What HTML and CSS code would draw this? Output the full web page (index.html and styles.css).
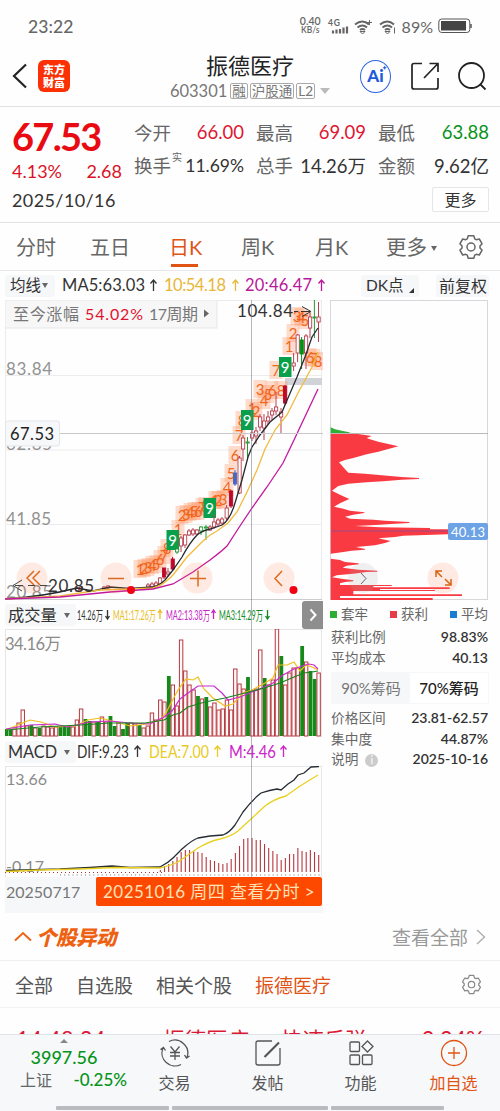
FILE: index.html
```html
<!DOCTYPE html>
<html lang="zh-CN">
<head>
    <meta charset="UTF-8">
    <meta name="viewport" content="width=device-width, initial-scale=1.0">
    <title>振德医疗 603301</title>
    <link rel="stylesheet" href="styles.css">
</head>
<body>
    <div class="app">
        <div class="status-bar">
            <span class="clock">23:22</span>
            <div class="status-right">
                <div class="net-speed"><span>0.40</span><span>KB/s</span></div>
                <svg class="status-icons" width="70" height="20" viewBox="328 15.500 70 20">
                    <text x="329" y="25" font-size="8.500" font-weight="700" textLength="12">4G</text>
                    <path d="M334 33v-3M337.500 33v-4M341 33v-4.500M344.500 33v-6M348 33v-7" stroke-width="2.200"/>
                    <path d="M356 24q7.500-6 14 0M358.500 27q5-4 9.500 0M361 29.500q2.500-2 5 0" stroke-width="2"/>
                    <path d="M361 31l2.500 2.500L366 31zM368 22h5M370.500 19.500v5"/>
                    <path d="M381 24q7.500-6 14 0M383.500 27q5-4 9.500 0M386 29.500q2.500-2 5 0" stroke-width="2"/>
                    <path d="M386 31l2.500 2.500L391 31zM395.500 27v6"/>
                </svg>
                <span class="battery-text">89%</span>
                <svg width="34" height="16" viewBox="0 0 34 16"><rect x=".8" y="1" width="31" height="13.500" rx="3" fill="none" stroke="#555"/><rect x="3" y="3" width="25" height="9.500" fill="#444"/><path d="M33 6v4" stroke="#555" stroke-width="1.500"/></svg>
            </div>
        </div>

        <header class="header">
            <div class="header-left">
                <svg width="16" height="26" viewBox="0 0 16 26"><path d="M14 1.500 2 13l12 11.500" fill="none" stroke="#222" stroke-width="2.200"/></svg>
                <div class="brand">东方<br>财富</div>
            </div>
            <div class="stock-title">
                <h1>振德医疗</h1>
                <div class="stock-code"><b>603301</b><i>融</i><i>沪股通</i><i class="level">L2</i><span class="caret"></span></div>
            </div>
            <div class="header-right">
                <div class="ai">Ai<sup>✦</sup></div>
                <svg width="28" height="28" viewBox="0 0 28 28" fill="none" stroke="#222" stroke-width="1.700"><path d="M11 1.500H3Q1 1.500 1 3.500V25q0 2 2 2H25q2 0 2-2V16M13 16 27 1.500M18.500 1.500H27V10"/></svg>
                <svg width="29" height="29" viewBox="0 0 29 29" fill="none" stroke="#222" stroke-width="1.800"><circle cx="13.500" cy="13.500" r="12.500"/><path d="m22 22 5.500 5.500"/></svg>
            </div>
        </header>

        <section class="quote">
            <div class="quote-main">
                <div class="price">67.53</div>
                <div class="change"><span>4.13%</span><span>2.68</span></div>
                <div class="date">2025/10/16</div>
            </div>
            <div class="quote-grid">
                <div class="cell"><label>今开</label><span class="up">66.00</span></div>
                <div class="cell"><label>最高</label><span class="up">69.09</span></div>
                <div class="cell"><label>最低</label><span class="down">63.88</span></div>
                <div class="cell"><label>换手<sup>实</sup></label><span class="rate">11.69%</span></div>
                <div class="cell"><label>总手</label><span>14.26万</span></div>
                <div class="cell"><label>金额</label><span>9.62亿</span></div>
                <button class="more">更多</button>
            </div>
        </section>

        <nav class="period-tabs">
            <span>分时</span>
            <span class="tab-five">五日</span>
            <span class="active">日K</span>
            <span>周K</span>
            <span class="tab-month">月K</span>
            <span class="more-tab">更多<em></em></span>
            <svg class="gear" width="26" height="26" viewBox="0 0 26 26"><use href="#gear"/></svg>
        </nav>

        <section class="charts">
            <div class="ma-row">
                <span class="pill">均线<em></em></span>
                <svg width="268" height="29" viewBox="60 271 268 29">
                    <g font-size="16.500">
                        <text x="62" y="291" fill="#333" textLength="83">MA5:63.03</text>
                        <text x="164" y="291" fill="#e9b63a" textLength="62">10:54.18</text>
                        <text x="245" y="291" fill="#b8189a" textLength="67">20:46.47</text>
                    </g>
                    <path d="M153.500 291v-11m-3 3.500 3-3.500 3 3.500" stroke="#333" class="arrow"/>
                    <path d="M235.500 291v-11m-3 3.500 3-3.500 3 3.500" stroke="#e9b63a" class="arrow"/>
                    <path d="M321.500 291v-11m-3 3.500 3-3.500 3 3.500" stroke="#b8189a" class="arrow"/>
                </svg>
                <span class="pill dk">DK点<em></em></span>
                <span class="pill">前复权</span>
            </div>

            <div class="chart-body">
                <div class="chart-left">
                    <svg id="kline" width="318" height="300" viewBox="5 300 318 300">
                        <g stroke="#ececec">
                            <path d="M5.500 300V600M321.500 300V600M5 300.500H322M5 375.500H322M5 450H322M5 524.500H322"/>
                            <path d="M5 599.500H322" stroke="#ccc"/>
                        </g>
                        <g font-size="17" fill="#929292">
                            <text x="6" y="375" textLength="46">83.84</text>
                            <text x="6" y="450" textLength="46">62.85</text>
                            <text x="6" y="525" textLength="45">41.85</text>
                            <text x="6" y="598" textLength="46">20.85</text>
                        </g>
                        <rect x="5" y="300" width="212" height="28" fill="#f7f7f8" stroke="#e7e7e9"/>
                        <g font-size="16">
                            <text x="13" y="319.500" fill="#777" textLength="66">至今涨幅</text>
                            <text x="85" y="319.500" fill="#e01330" textLength="58">54.02%</text>
                            <text x="149" y="319.500" fill="#777" textLength="49">17周期</text>
                        </g>
                        <path d="M204 309.500v8l5-4z" fill="#666"/>
                        <rect x="285" y="378" width="37" height="7" fill="#d2d3d8"/>
                        <g id="marks"></g>
                        <g id="candles"></g>
                        <g fill="none" stroke-width="1.300">
                            <path stroke="#262a2e" d="M5 599C22 598 50 595 77 588L93 591 110 587 130 588.500 153 587Q160 585 165 580L173 570 182 557Q190 542 198 534 204 530 210 529L222 525Q230 520 235 503L242 480 248 457 252 447 260 435 270 422 282 412 288 398 297 377 305 357 312 337 318 328"/>
                            <path stroke="#f0bb3c" d="M5 599 60 596 100 590 130 589 153 588Q164 585 173 575L187 557 203 541Q209 535 217 531L228 523 237 512 247 492 257 470 265 449 275 430 287 415 298 393 312 367 318 352"/>
                            <path stroke="#c3189e" d="M5 599 60 597 110 592 153 589 173 584 193 572 210 560Q222 551 227 546L238 529 252 508 267 487 283 463 294 440 318 389"/>
                        </g>
                        <path d="M5 433.500H323" stroke="#c8c8cc"/>
                        <rect x="5.500" y="421" width="54" height="25" rx="2" fill="#f7f8fa" stroke="#e4e5e8"/>
                        <text x="10" y="439.500" font-size="16.500" fill="#222" textLength="44">67.53</text>
                        <text x="237" y="317" font-size="17" fill="#333" textLength="56">104.84</text>
                        <path d="M294 311.500h4m3 0h9m-8-5 9 5-9 5" stroke="#333" fill="none"/>
                        <g fill="#ff7a45" fill-opacity=".15">
                            <circle cx="32" cy="578" r="15.500"/><circle cx="116" cy="578" r="15.500"/><circle cx="197" cy="578" r="15.500"/><circle cx="279" cy="578" r="15.500"/>
                        </g>
                        <path d="m34 571-7 7 7 7m6-14-7 7 7 7M108 578.500h16M190 578.500h16m-8-8v16M282 571l-7 7.500 7 7.500" fill="none" stroke="#dc6a20" stroke-width="1.500"/>
                        <text x="48" y="592" font-size="17" fill="#333" textLength="46">20.85</text>
                        <path d="m22 580-9 5.500 9 5.500M15 585.500h8m5 0h7m5 0h7" stroke="#444" fill="none"/>
                        <circle cx="131" cy="590" r="4" fill="#f30012"/><circle cx="293.500" cy="590" r="4" fill="#f30012"/>
                    </svg>

                    <div class="indicator-row">
                        <span class="pill wide">成交量<em></em></span>
                        <svg width="196" height="29" viewBox="76 600 196 29" font-size="13">
                            <text x="77" y="619.500" fill="#333" textLength="26" lengthAdjust="spacingAndGlyphs">14.26万</text>
                            <text x="113" y="619.500" fill="#e8bd25" textLength="43" lengthAdjust="spacingAndGlyphs">MA1:17.26万</text>
                            <text x="166" y="619.500" fill="#c824c8" textLength="44" lengthAdjust="spacingAndGlyphs">MA2:13.38万</text>
                            <text x="219" y="619.500" fill="#108b20" textLength="44" lengthAdjust="spacingAndGlyphs">MA3:14.29万</text>
                            <path class="arrow" stroke="#333" d="M107.500 610v9m-2-3 2 3 2-3"/>
                            <path class="arrow" stroke="#e8bd25" d="M160 619v-9m-2 3 2-3 2 3"/>
                            <path class="arrow" stroke="#c824c8" d="M213.500 619v-9m-2 3 2-3 2 3"/>
                            <path class="arrow" stroke="#108b20" d="M267.500 610v9m-2-3 2 3 2-3"/>
                        </svg>
                        <svg class="expand" width="21" height="28" viewBox="0 0 21 28"><rect width="24" height="28" rx="3" fill="#8e8e8e"/><path d="m8.500 8.500 5 5.500-5 5.500" fill="none" stroke="#fff" stroke-width="2"/></svg>
                    </div>

                    <svg id="volume" width="318" height="108" viewBox="5 629 318 108">
                        <path d="M5 629.500H322M5.500 629V737M321.500 629V737" stroke="#e6e6e6"/>
                        <text x="5" y="650" font-size="16.500" fill="#8b8b8b" textLength="56">34.16万</text>
                        <g id="volume-bars"></g>
                        <g fill="none" stroke-width="1.200">
                            <path stroke="#f0c01d" d="M6 730 20 724 30 720 41 722 55 727 75 726 88 720 100 718 120 723 130 726 147 724 160 720 166 713 170 705 178 690 186 679 193 680 198 677 204 689 213 698 225 706 233 704 243 693 252 690 265 683 273 678 278 665 287 665 294 662 300 671 306 665 312 667 318 670"/>
                            <path stroke="#c82ccc" d="M6 729 30 725 55 724 67 727 90 722 110 721 130 723 150 724 164 717 172 711 180 699 188 693 198 686 214 686 222 693 228 700 240 697 252 692 260 689 273 683 283 675 294 669 302 666 309 664 314 665 318 669"/>
                            <path stroke="#188320" d="M6 730 40 727 80 725 110 723 145 723 164 720 173 715 180 713 188 707 205 702 225 698 245 693 264 688 280 683 294 677 304 673 312 672 318 671"/>
                        </g>
                    </svg>

                    <div class="indicator-row">
                        <span class="pill wide">MACD<em></em></span>
                        <svg width="214" height="29" viewBox="75 737 214 29" font-size="16.500">
                            <text x="76" y="758" fill="#333" textLength="52" lengthAdjust="spacingAndGlyphs">DIF:9.23</text>
                            <text x="148" y="758" fill="#e9ca22" textLength="60" lengthAdjust="spacingAndGlyphs">DEA:7.00</text>
                            <text x="228" y="758" fill="#cd25cb" textLength="47" lengthAdjust="spacingAndGlyphs">M:4.46</text>
                            <path class="arrow" stroke="#333" d="M136.500 757v-11m-3 3.500 3-3.500 3 3.500"/>
                            <path class="arrow" stroke="#e9ca22" d="M216.500 757v-11m-3 3.500 3-3.500 3 3.500"/>
                            <path class="arrow" stroke="#cd25cb" d="M282.500 757v-11m-3 3.500 3-3.500 3 3.500"/>
                        </svg>
                    </div>

                    <svg id="macd" width="318" height="111" viewBox="5 766 318 111">
                        <path d="M5 766.500H322M5.500 766V877M321.500 766V877" stroke="#e6e6e6"/>
                        <path d="M5 872.500H164" stroke="#a33" stroke-dasharray="1 3"/>
                        <path d="M60 875H322" stroke="#777" stroke-dasharray="1 3.170"/>
                        <g font-size="16" fill="#8b8b8b">
                            <text x="6" y="785" textLength="41">13.66</text>
                            <text x="6" y="872" textLength="38">-0.17</text>
                        </g>
                        <g id="macd-bars"></g>
                        <g fill="none" stroke-width="1.300">
                            <path stroke="#252c33" d="M6 870.500 60 869 90 867.500 112 866 130 867.500 160 867Q168 863 173 858L182 849Q192 840 198 838L210 836 223 835Q229 833 235 825L243 812Q252 800 261 793 270 790 277 789L281 790 288 784 294 780 298 775 304 773 311 767 319 766.500"/>
                            <path stroke="#ead01e" d="M6 871.500 40 870 80 869 115 867.500 160 868Q172 865 178 862L198 848Q210 841 220 839 232 836 238 831L251 819 265 806Q274 799 286 796L300 786 318 775"/>
                        </g>
                    </svg>

                    <div class="date-row">
                        <span>20250717</span>
                        <b>20251016 周四 查看分时 &gt;</b>
                    </div>
                </div>

                <div class="chart-right">
                    <svg width="159" height="300" viewBox="330 300 159 300">
                        <rect x="330.500" y="300.500" width="157" height="299" fill="none" stroke="#d8d8dc"/>
                        <g transform="translate(320 400) scale(.33333)">
                            <path fill="#2fae36" d="M32 82 45 88 65 92 88 97 90 99H32z"/>
                            <path fill="#fa3a43" d="M32 99H90L130 104 155 108 140 114 150 118 175 125 205 132 235 139 205 147 175 155 140 163 100 174 75 180 57 187 70 202 85 218 135 221 185 226 245 231 297 234V237L245 239 190 244 140 247 85 251 55 258 36 272 60 284 88 297 60 310 42 320 70 326 90 332 133 337V339L100 344 75 350 90 356 160 359 195 362 268 366V369L225 371 180 374 105 378 180 382 330 384V388H400V403H384L250 407 225 411 175 415 212 423 195 429 165 436 108 441 135 447V449L95 452 65 457 32 461zM32 476 60 480 75 486 116 490V493L80 497 68 503 115 509 172 512V515L140 516 100 521 50 526 36 532 70 537 100 541V544L75 546 60 550 60 555H215V558H160V562H389V567H180V570H345V573H100V583H426V588H60V594H338V600H32z"/>
                        </g>
                        <path d="M331 531H449" stroke="#9b4a8a" stroke-width="1.200"/>
                        <path d="M330 433.500H488" stroke="#b9b9bd"/>
                        <rect x="448" y="523" width="40" height="17" rx="2" fill="#6da2e6"/>
                        <text x="451" y="536.500" font-size="13" fill="#fff" textLength="34">40.13</text>
                        <circle cx="363" cy="578" r="15" fill="#aaa" fill-opacity=".18"/>
                        <path d="m361 573 5 5.500-5 5.500" fill="none" stroke="#666"/>
                        <circle cx="443" cy="578" r="15.500" fill="#ff7a45" fill-opacity=".15"/>
                        <path d="m442 577-6-6m0 6v-6h6m3 8 6 6m0-6v6h-6" fill="none" stroke="#d76413" stroke-width="1.500"/>
                    </svg>

                    <div class="legend">
                        <span><i class="g"></i>套牢</span><span><i class="r"></i>获利</span><span><i class="b"></i>平均</span>
                    </div>
                    <div class="info"><span>获利比例</span><b>98.83%</b></div>
                    <div class="info"><span>平均成本</span><b>40.13</b></div>
                    <div class="switch"><span>90%筹码</span><span class="on">70%筹码</span></div>
                    <div class="info"><span>价格区间</span><b>23.81-62.57</b></div>
                    <div class="info"><span>集中度</span><b>44.87%</b></div>
                    <div class="info"><span>说明<em>i</em></span><b>2025-10-16</b></div>
                </div>
                <div class="crosshair"></div>
            </div>
        </section>

        <section class="moves-head">
            <svg width="18" height="11" viewBox="0 0 18 11"><path d="m1 9.500 8-7.500 8 7.500" fill="none" stroke="#ed6514" stroke-width="2"/></svg>
            <h2>个股异动</h2>
            <span>查看全部</span>
            <svg width="10" height="18" viewBox="0 0 10 18"><path d="m1 2 7.500 7L1 16" fill="none" stroke="#aaa" stroke-width="1.300"/></svg>
        </section>
        <nav class="moves-tabs">
            <span>全部</span><span>自选股</span><span>相关个股</span><span class="active">振德医疗</span>
            <svg width="21" height="21" viewBox="0 0 26 26"><use href="#gear"/></svg>
        </nav>
        <div class="moves-list">
            <div class="move"><b>14:48:34</b><span>振德医疗</span><span>快速反弹</span><b>2.24%</b></div>
        </div>

        <footer class="bottom-nav">
            <div class="index-box">
                <span class="tri"></span>
                <strong>3997.56</strong>
                <div><span>上证</span><b>-0.25%</b></div>
            </div>
            <div class="nav-item">
                <svg width="30" height="28" viewBox="0 0 30 28"><path d="M9 2.500A13 13 0 0 1 27 18.500M29.500 17l-3 2-2-3M21 25.500A13 13 0 0 1 3 9M.5 10.500l3-2 2 3M10.500 7.500 15 13l4.500-5.500M10 13.500h10M10 17h10M15 13v8"/></svg>
                <span>交易</span>
            </div>
            <div class="nav-item">
                <svg width="28" height="28" viewBox="0 0 28 28"><path d="M18 2H4Q2 2 2 4V24q0 2 2 2H24q2 0 2-2V9"/><path d="M10.500 18 25 3.500" stroke-width="2.200"/></svg>
                <span>发帖</span>
            </div>
            <div class="nav-item">
                <svg width="26" height="28" viewBox="0 0 26 28"><rect x="2" y="3" width="9.500" height="9.500" rx="1"/><rect x="2" y="16" width="9.500" height="9.500" rx="1"/><rect x="14.500" y="16" width="9.500" height="9.500" rx="1"/><path d="m19.500 2 5.500 5.500-5.500 5.500L14 7.500z"/></svg>
                <span>功能</span>
            </div>
            <div class="nav-item add">
                <svg width="28" height="28" viewBox="0 0 28 28"><circle cx="14" cy="14" r="12.500"/><path d="M8 14h12M14 8v12"/></svg>
                <span>加自选</span>
            </div>
            <div class="home-bar"><i></i><i></i><i></i></div>
        </footer>
    </div>

    <svg width="0" height="0" class="defs">
        <symbol id="gear" viewBox="0 0 26 26">
            <path d="M10.200 1.800H15.800L16.700 4.800 18.300 5.700 21.300 5 24.100 9.800 22 12.100V13.900L24.100 16.200 21.300 21 18.300 20.300 16.700 21.200 15.800 24.200H10.200L9.300 21.200 7.700 20.300 4.700 21 1.900 16.200 4 13.900V12.100L1.900 9.800 4.700 5 7.700 5.700 9.300 4.800z" fill="none" stroke="currentColor" stroke-width="1.500" stroke-linejoin="round"/>
            <circle cx="13" cy="13" r="4" fill="none" stroke="currentColor" stroke-width="1.500"/>
        </symbol>
    </svg>
    <script src="script.js"></script>
</body>
</html>
```
FILE: styles.css
```css
* {
    box-sizing: border-box;
}
body {
    margin: 0;
    font-family: Lato, "Noto Sans CJK SC", sans-serif;
    background-color: #fefefe;
    color: #333;
}
h1, h2 { margin: 0; font-weight: normal; }
i, em { font-style: normal; }
svg { display: block; flex: none; }
.defs { position: absolute; }
.app {
    width: 500px;
    height: 1111px;
    display: flex;
    flex-direction: column;
    overflow: hidden;
    white-space: nowrap;
}
.app > * { flex: none; }

/* 状态栏 */
.status-bar {
    height: 52px;
    padding: 0 28px;
    display: flex;
    justify-content: space-between;
    align-items: center;
    color: #666;
}
.clock { font-size: 17.5px; letter-spacing: .1px; font-weight: 500; }
.status-right { display: flex; align-items: center; }
.net-speed {
    display: flex;
    flex-direction: column;
    font-size: 10.5px;
    line-height: 9px;
    text-align: center;
    font-weight: 600;
    margin-right: 6px;
}
.net-speed span + span { font-size: 8.5px; }
.status-icons { fill: #666; }
.status-icons path { fill: none; stroke: #666; }
.battery-text { font-size: 16px; margin: 0 5px 0; }

/* 标题 */
.header {
    height: 55px;
    border-bottom: 1px solid #e3e3e6;
    display: grid;
    grid-template-columns: 140px 220px 140px;
    align-items: center;
}
.header-left {
    display: flex;
    align-items: center;
    gap: 10px;
    padding-left: 12px;
    margin-top: -6px;
}
.brand {
    width: 32px;
    height: 32px;
    border-radius: 6px;
    background-color: #fb3005;
    color: #fff;
    font: 900 11px/13px "Noto Sans CJK SC", sans-serif;
    text-align: center;
    padding-top: 3px;
}
.stock-title { text-align: center; margin-top: -7px; }
.stock-title h1 { font-size: 22px; line-height: 29px; color: #222; }
.stock-code {
    display: flex;
    justify-content: center;
    align-items: center;
    gap: 2px;
    height: 20px;
    margin-top: 1px;
    color: #777;
}
.stock-code b { font-weight: 400; font-size: 16.5px; margin-right: 1px; }
.stock-code i {
    font-size: 13.5px;
    line-height: 14px;
    border: 1px solid #aaa;
    border-radius: 2px;
    padding: 0 1px;
    height: 16px;
}
.caret {
    border: 5px solid transparent;
    border-top: 6px solid #bbb;
    border-bottom: 0;
    margin-left: 3px;
}
.header-right { display: flex; align-items: center; gap: 19px; padding-right: 13px; justify-content: flex-end; margin-top: -6px; }
.ai {
    width: 33px;
    height: 33px;
    border: 1.5px solid #2e64df;
    border-radius: 50%;
    color: #2159dc;
    font: 900 17px/30px Lato, sans-serif;
    text-align: center;
    position: relative;
    margin-right: 1px;
}
.ai sup { font-size: 6px; position: absolute; top: -8px; right: 3px; }

/* 报价 */
.quote {
    height: 116px;
    border-bottom: 1px solid #e3e3e6;
    padding: 8px 11px 0 12px;
    display: flex;
    gap: 12px;
}
.quote-main { width: 110px; color: #dc1226; }
.price { font-size: 38px; font-weight: 700; line-height: 43px; letter-spacing: -1.7px; color: #e90b12; }
.change { display: flex; justify-content: space-between; font-size: 18px; line-height: 27px; }
.date { font-size: 18px; line-height: 31px; color: #333; letter-spacing: .4px; }
.quote-grid {
    flex: 1;
    display: grid;
    grid-template-columns: 110px 110px 111px;
    grid-template-rows: 33px 34px 34px;
    column-gap: 12px;
}
.cell { display: flex; justify-content: space-between; align-items: center; font-size: 18.5px; }
.cell label { color: #666; position: relative; }
.cell sup { position: absolute; left: 38px; top: -3px; font-size: 10px; }
.cell .up { color: #dd1732; }
.cell .down { color: #079319; }
.cell .rate { font-size: 17.5px; }
.more {
    grid-column: 3;
    justify-self: end;
    align-self: center;
    width: 57px;
    height: 25px;
    padding: 0;
    border: 1px solid #e6e6e9;
    background-color: #fff;
    border-radius: 2px;
    font: 16px/22px "Noto Sans CJK SC", sans-serif;
    color: #333;
}

/* 周期 */
.period-tabs {
    height: 48px;
    border-bottom: 1px solid #e8e8ea;
    display: flex;
    align-items: center;
    padding: 0 16px;
    font-size: 20px;
    color: #666;
}
.period-tabs span { width: 74px; line-height: 46px; height: 46px; }
.period-tabs .tab-five { width: 79px; }
.period-tabs .active { width: 72px; color: #df5315; position: relative; }
.period-tabs .active::after {
    content: "";
    position: absolute;
    left: 2px;
    top: 40px;
    width: 27px;
    height: 3px;
    background-color: #df5315;
}
.period-tabs .tab-month { width: 71px; }
.period-tabs .more-tab { width: 72px; font-size: 20.5px; }
.more-tab em, .pill em {
    display: inline-block;
    border: 3.5px solid transparent;
    border-top: 5px solid #666;
    border-bottom: 0;
    margin-left: 4px;
    vertical-align: 4px;
}
.gear { color: #666; }

/* 图表 */
.charts { padding: 0 10px 0 5px; height: 642px; }
.charts svg { font-family: Lato, "Noto Sans CJK SC", sans-serif; }
.ma-row { display: flex; height: 29px; align-items: center; }
.pill {
    background-color: #f6f7f9;
    height: 22px;
    line-height: 21px;
    font-size: 15.5px;
    padding: 0 0 0 5px;
    width: 50px;
    border-radius: 3px;
    color: #333;
    margin-right: 5px;
}
.pill em { margin-left: 1px; vertical-align: 3px; }
.pill.dk { margin: 0 17px 0 33px; width: 58px; flex: none; }
.pill.dk em { border: 0; border-left: 5px solid transparent; border-bottom: 5px solid #333; vertical-align: -2px; margin-left: 5px; }
.pill.dk + .pill { padding: 0 0 0 3px; margin: 0; width: 53px; flex: none; font-size: 16px; }
.arrow { fill: none; stroke-width: 1.3; }
.chart-body { display: flex; gap: 7px; position: relative; height: 613px; }
.chart-left { width: 318px; display: flex; flex-direction: column; }
.indicator-row { height: 29px; display: flex; align-items: center; }
.indicator-row .pill.wide { width: 71px; padding-left: 3px; font-size: 16.3px; margin: 0; }
.indicator-row .pill.wide em { margin-left: 7px; }
.expand { margin-left: auto; }
.date-row {
    height: 36px;
    background-color: #f6f7f9;
    display: flex;
    justify-content: space-between;
    align-items: flex-start;
    color: #777;
    font-size: 16px;
}
.date-row span { line-height: 29px; padding-left: 1px; }
.date-row b {
    background-color: #fd4900;
    color: #ffe1b8;
    font-weight: 400;
    width: 226px;
    height: 29px;
    line-height: 29px;
    text-align: center;
    font-size: 17px;
    letter-spacing: .45px;
    border-radius: 2px;
    margin-right: 1px;
}
.chart-right { width: 159px; }
.legend { display: flex; justify-content: space-between; font-size: 13.5px; line-height: 19px; color: #666; padding: 5px 1px 0 0; height: 27px; }
.legend i { display: inline-block; width: 7px; height: 7px; margin-right: 4px; vertical-align: 1px; }
.legend .g { background-color: #2cae33; }
.legend .r { background-color: #e73d49; }
.legend .b { background-color: #197ed3; }
.info { display: flex; justify-content: space-between; height: 20.5px; line-height: 20px; font-size: 13.7px; color: #666; padding: 0 1px; }
.info b { color: #333; font-weight: 600; font-size: 14px; }
.info em {
    display: inline-block;
    width: 13px;
    height: 13px;
    line-height: 12px;
    border-radius: 50%;
    background-color: #ccc;
    color: #fff;
    text-align: center;
    font-size: 11px;
    margin-left: 7px;
}
.switch { display: flex; background-color: #f6f7f9; padding: 1px; margin: 4px 0 4px 1px; height: 32px; line-height: 30px; font-size: 15px; }
.switch span { flex: 1; text-align: center; color: #777; }
.switch .on { background-color: #fff; color: #222; font-weight: 500; }
.crosshair { position: absolute; left: 246px; top: 0; width: 1px; height: 577px; background-color: rgba(120, 120, 135, .55); }

/* 个股异动 */
.moves-head { height: 48px; border-bottom: 1px solid #efeff1; display: flex; align-items: center; padding: 0 14px; }
.moves-head h2 { font-size: 20.5px; font-weight: 900; font-style: italic; color: #ed6110; margin: -2px 0 0 4px; flex: 1; letter-spacing: -.5px; }
.moves-head span { font-size: 19px; color: #999; margin-right: 8px; }
.moves-tabs { height: 47px; border-bottom: 1px solid #f2f2f3; display: flex; align-items: center; gap: 23px; padding: 0 18px 0 15px; font-size: 19px; color: #555; }
.moves-tabs .active { color: #df5315; }
.moves-tabs svg { margin-left: auto; color: #888; }
.moves-list { height: 26px; overflow: hidden; }
.move { padding: 18px 16px 0; display: grid; grid-template-columns: 147px 118px 1fr auto; font-size: 21.5px; line-height: 28px; color: #dc1935; }
.move b { font-weight: 400; font-size: 22.5px; line-height: 27px; }

/* 底部导航 */
.bottom-nav {
    height: 77px;
    border-top: 1px solid #dfe2e6;
    background-color: #f6f8fa;
    display: grid;
    grid-template-columns: 128px 93px 93px 93px 93px;
    grid-template-rows: 71px 5px;
}
.index-box { text-align: center; color: #079319; }
.index-box .tri { display: block; width: 8px; border: 4px solid transparent; border-top: 0; border-bottom-color: #888; margin: 4px auto 0; }
.index-box strong { display: block; font-weight: 500; font-size: 18px; line-height: 25px; margin-top: 2px; }
.index-box div { display: flex; justify-content: space-between; padding: 0 1px 0 20px; font-size: 16px; line-height: 20px; }
.index-box div span { color: #666; }
.index-box b { font-weight: 500; font-size: 17px; }
.nav-item { display: flex; flex-direction: column; align-items: center; padding-top: 4px; font-size: 16px; line-height: 24px; color: #555; }
.nav-item span { margin-top: 4px; }
.nav-item svg { fill: none; stroke: currentColor; stroke-width: 1.3; }
.nav-item.add { color: #e25412; }
.home-bar { grid-column: 1 / -1; display: flex; gap: 3px; padding: 0 56px; }
.home-bar i { height: 4px; background-color: #b9bbbe; width: 113px; border-radius: 1px; }
.home-bar i:nth-child(2) { width: 157px; }
```
FILE: script.js
```js
const NS = 'http://www.w3.org/2000/svg';

function add(parent, tag, attrs, text) {
    const el = document.createElementNS(NS, tag);
    for (const key in attrs) el.setAttribute(key, attrs[key]);
    if (text !== undefined) el.textContent = text;
    parent.appendChild(el);
}

// 成交量：柱高，负数为阴线
const volume = [
    -7, -6, 7, 13, 26, 10, -11, 8, -8, 10, 9, 8, 9, -9, -9, -9, 9, 16, 27, -17,
    -15, 14, -14, 19, 14, -20, -10, 13, -7, -13, 13, 12, -11, 8, 10, 23, 16, 36, 34, -60,
    51, 30, 96, 65, 51, 46, -40, 37, -39, 29, 33, 26, 27, 36, 26, 67, 52, 47, -59, 45,
    47, 86, -58, 51, 56, 107, -80, 51, 63, 68, 68, -90, 74, -65, -57, 63
];
const volumeBars = document.getElementById('volume-bars');
volume.forEach((v, i) => {
    const h = Math.abs(v);
    const x = 6 + i * 4.167;
    add(volumeBars, 'rect', {
        x: x - 1.6, y: 736 - h, width: v < 0 ? 3.8 : 3.4, height: h,
        fill: v < 0 ? '#16891a' : '#fff8f8', stroke: v < 0 ? 'none' : '#b63a40', 'stroke-width': 1
    });
});

// MACD 柱，从第 37 根开始
const macd = [2, 6, 8, 11, 15, 20, 22, 22, 21, 20, 19, 15, 12, 11, 9, 8, 9, 13, 19, 26, 33, 34, 34, 32, 32, 28, 24, 21, 18, 12, 14, 18, 18, 24, 21, 20, 22, 20, 17];
const macdBars = document.getElementById('macd-bars');
macd.forEach((h, i) => {
    add(macdBars, 'rect', { x: 159.8 + i * 4.167, y: 872 - h, width: 1.1, height: h, fill: '#b53840' });
});

// K线：[x, 实体上, 实体下, 最高, 最低, 类型]
const candles = [
    [77, 588, 591, 587, 592, 'r'], [81, 587, 590, 586, 592, 'r'], [104, 587, 589, 586, 590, 'r'], [108, 586, 588, 585, 589, 'r'],
    [148, 585, 587, 583, 588, 'r'], [152, 584, 587, 582, 588, 'r'], [156, 583, 586, 581, 587, 'r'],
    [160, 578, 584, 577, 586, 'r'], [164, 568, 577, 568, 579, 's'], [168, 572, 574, 568, 576, 'r'], [172.6, 559, 569, 557, 571, 's'],
    [177, 549, 552, 545, 554, 'g'], [181, 538, 546, 536, 552, 'r'], [185, 535, 545, 534, 548, 'r'], [189, 531, 535, 529, 536, 'r'],
    [193, 530, 534, 528, 536, 'r'], [197, 530, 534, 529, 535, 'r'], [201, 527, 531, 526, 535, 'g'], [206, 527, 528, 525, 540, 'g'],
    [210, 527, 530, 525, 531, 'r'], [214, 522, 527, 514, 529, 'r'], [218, 520, 524, 518, 526, 'r'], [222, 519, 523, 517, 525, 'r'],
    [226.6, 508, 518, 505, 520, 'r'], [231, 491, 506, 490, 508, 's'], [235, 473, 484, 470, 486, 'b'], [239.5, 458, 493, 456, 494, 'r'],
    [243, 438, 449, 435, 461, 'r'], [247.5, 442, 443, 437, 458, 'g'], [252, 433, 438, 430, 441, 'r'], [256, 431, 436, 427, 444, 'r'],
    [260, 417, 427, 414, 431, 'r'], [264, 421, 428, 414, 440, 'r'], [268, 417, 421, 411, 424, 'r'], [272, 411, 415, 408, 420, 'r'],
    [276, 407, 411, 392, 415, 'r'], [281, 412, 417, 408, 433, 'r'], [285, 386, 403, 385, 405, 's'], [293.6, 363, 366, 353, 371, 'r'],
    [297.6, 335, 353, 334, 362, 'r'], [301.6, 340, 354, 337, 369, 'f'], [306, 336, 353, 334, 369, 'r'], [310, 317, 328, 313, 338, 'r'],
    [314.4, 317, 318, 300, 338, 'g'], [318.5, 317, 322, 302, 342, 'r']
];
const candleGroup = document.getElementById('candles');
candles.forEach(([x, top, bottom, high, low, type]) => {
    const color = { r: '#b84050', s: '#bd0829', g: '#239a33', f: '#078e16', b: '#4567c4' }[type];
    const solid = type !== 'r' && type !== 'g';
    add(candleGroup, 'path', { d: `M${x} ${high}V${low}`, stroke: color });
    add(candleGroup, 'rect', { x: x - 1.5, y: top, width: 3.2, height: bottom - top, fill: solid ? color : '#fff', stroke: color, 'stroke-width': .9 });
});

// 九转序列标记
const marks = [
    [140, 569, 1], [144, 568, 2], [148, 567, 3], [152, 565, 4], [156, 564, 5], [160, 559, 6], [164, 555, 7], [167, 548, 8],
    [178, 529, 1], [182, 515, 2], [186, 514, 3], [190, 512, 4], [194, 511, 5], [198, 511, 6], [202, 507, 7], [205, 506, 8],
    [215, 500, 1], [218, 500, 2], [223, 499, 3], [227, 487, 4], [231, 473, 5], [235, 455, 6], [239, 435, 7], [242, 420, 8],
    [252, 408, 1], [256, 411, 2], [260, 389, 3], [264, 400, 4], [268, 394, 5], [272, 390, 6], [276, 370, 7], [281, 390, 8],
    [289, 346, 1], [293, 333, 2], [297, 316, 3], [301, 317, 4], [305, 320, 5], [310, 357, 6], [314, 358, 7], [318, 361, 8],
    [172.5, 540, 9], [209.5, 508, 9], [247, 420, 9], [285, 367, 9]
];
const markGroup = document.getElementById('marks');
marks.forEach(([x, y, n]) => {
    if (n !== 9) add(markGroup, 'rect', { x: x - 6.5, y: y - 9, width: 13, height: 18, fill: '#ff8a55', 'fill-opacity': .3 });
});
marks.forEach(([x, y, n]) => {
    if (n === 9) add(markGroup, 'rect', { x: x - 6, y: y - 10, width: 12.5, height: 20, fill: '#08a04b' });
    add(markGroup, 'text', { x, y: y + 5.5, 'text-anchor': 'middle', 'font-size': 15, fill: n === 9 ? '#fff' : '#f1661c' }, n);
});
```
